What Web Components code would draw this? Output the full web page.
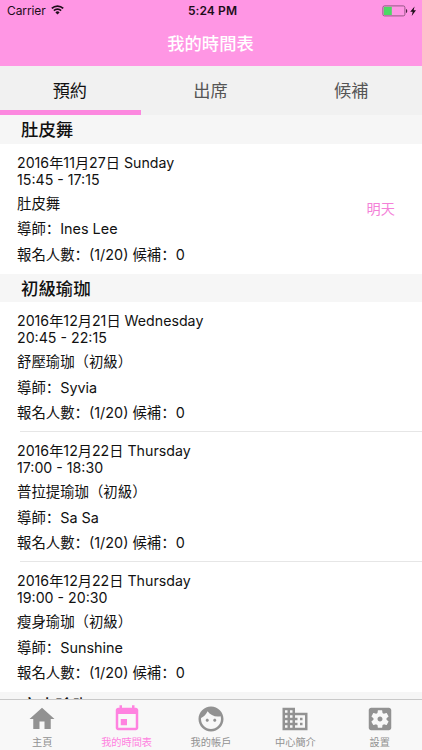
<!DOCTYPE html>
<html lang="zh-Hant">
<head>
<meta charset="utf-8">
<meta name="viewport" content="width=device-width, initial-scale=1">
<title>我的時間表</title>
<style>
  html, body { margin: 0; height: 100%; }
  body {
    --pink: #ff82e0;
    overflow: hidden;
    background: #fff;
    color: #111;
    font-family: Inter, "Noto Sans CJK TC", sans-serif;
  }
</style>
</head>
<body>
<app-screen>
  <status-bar slot="top" carrier="Carrier" time="5:24 PM"></status-bar>
  <nav-title slot="top">我的時間表</nav-title>
  <tab-strip slot="top" tabs="預約,出席,候補" selected="0"></tab-strip>

  <class-section name="肚皮舞">
    <class-entry date="2016年11月27日 Sunday" time="15:45 - 17:15" name="肚皮舞" teacher="Ines Lee" note="明天"></class-entry>
  </class-section>
  <class-section name="初級瑜珈">
    <class-entry date="2016年12月21日 Wednesday" time="20:45 - 22:15" name="舒壓瑜珈（初級）" teacher="Syvia"></class-entry>
    <class-entry date="2016年12月22日 Thursday" time="17:00 - 18:30" name="普拉提瑜珈（初級）" teacher="Sa Sa"></class-entry>
    <class-entry date="2016年12月22日 Thursday" time="19:00 - 20:30" name="瘦身瑜珈（初級）" teacher="Sunshine"></class-entry>
  </class-section>
  <class-section name="空中瑜珈"></class-section>

  <bottom-bar slot="bottom">
    <bar-item icon="home">主頁</bar-item>
    <bar-item icon="event" active>我的時間表</bar-item>
    <bar-item icon="face">我的帳戶</bar-item>
    <bar-item icon="business">中心簡介</bar-item>
    <bar-item icon="settings">設置</bar-item>
  </bottom-bar>
</app-screen>

<script>
// Shared base: stamps render() into an open shadow root.
class BaseElement extends HTMLElement {
  constructor() {
    super();
    this.attachShadow({ mode: "open" });
  }
  connectedCallback() {
    this.shadowRoot.innerHTML = this.render();
  }
  attr(name) {
    return this.getAttribute(name) || "";
  }
}

// Column layout: fixed top, clipped list, fixed bottom.
customElements.define("app-screen", class extends BaseElement {
  render() {
    return `
      <style>
        :host { display: flex; flex-direction: column; height: 100vh; overflow: hidden; }
        header, footer { flex: none; }
        main { flex: 1; min-height: 0; overflow: hidden; }
      </style>
      <header><slot name="top"></slot></header>
      <main><slot></slot></main>
      <footer><slot name="bottom"></slot></footer>`;
  }
});

customElements.define("status-bar", class extends BaseElement {
  render() {
    return `
      <style>
        :host {
          display: grid; grid-template-columns: 1fr auto 1fr; align-items: center;
          height: 22px; padding: 0 4px 0 7px; box-sizing: border-box;
          background: #ff96e4; color: #1d0d19; font-size: 12px; line-height: 22px;
        }
        .left, .right { display: flex; align-items: center; }
        .left { gap: 5px; }
        .left svg { margin-top: -2px; }
        .left span { letter-spacing: -0.1px; }
        .right { justify-content: flex-end; }
        .time { font-weight: 600; letter-spacing: 0.1px; }
        svg { display: block; }
      </style>
      <div class="left">
        <span>${this.attr("carrier")}</span>
        <svg width="13" height="10" viewBox="0 0 13 10" fill="none" stroke="#1d0d19" stroke-width="1.7">
          <path d="M.8 3.4a8.1 8.1 0 0 1 11.4 0M2.9 5.6a5.1 5.1 0 0 1 7.2 0"/>
          <path d="M6.5 9.6 4.4 7.4a3 3 0 0 1 4.2 0z" fill="#1d0d19" stroke="none"/>
        </svg>
      </div>
      <div class="time">${this.attr("time")}</div>
      <div class="right">
        <svg width="36" height="12" viewBox="0 0 36 12">
          <rect x=".9" y=".9" width="22" height="10" rx="1.6" fill="none" stroke="#8a4f7b" stroke-width=".9"/>
          <path d="M1.8 1.8h8v8.2h-8z" fill="#4cd964"/>
          <path d="M24.2 4c1.3.3 1.3 3.7 0 4z" fill="#1d0d19"/>
          <path d="M32.6 1.4 28.2 6.8h2.5l-1 4.2 4.3-5.7h-2.4z" fill="#1d0d19"/>
        </svg>
      </div>`;
  }
});

customElements.define("nav-title", class extends BaseElement {
  render() {
    return `
      <style>
        :host {
          display: block; height: 44px; background: #ff96e4; color: #fff;
          font-size: 17.3px; font-weight: 500; line-height: 43px; text-align: center;
          text-indent: -1px;
        }
      </style>
      <slot></slot>`;
  }
});

customElements.define("tab-strip", class extends BaseElement {
  render() {
    const selected = Number(this.attr("selected"));
    const tabs = this.attr("tabs").split(",").map((label, i) =>
      `<div class="${i === selected ? "on" : ""}">${label}</div>`).join("");
    return `
      <style>
        :host {
          display: grid; grid-template-columns: repeat(3, 1fr);
          height: 49px; background: #f1f1f1; color: #555;
          font-size: 17.2px; line-height: 49px; text-align: center; text-indent: -1px;
        }
        div { box-sizing: border-box; height: 49px; }
        .on { color: #111; box-shadow: inset 0 -5px #fc88df; }
      </style>
      ${tabs}`;
  }
});

customElements.define("class-section", class extends BaseElement {
  render() {
    return `
      <style>
        :host { display: block; }
        h2 {
          margin: 0; height: 28.7px; padding-left: 21px; background: #f6f6f6;
          font-size: 17.4px; font-weight: 500; line-height: 30.5px;
        }
        :host(:empty) h2 { line-height: 28px; }
      </style>
      <h2>${this.attr("name")}</h2>
      <slot></slot>`;
  }
});

customElements.define("class-entry", class extends BaseElement {
  render() {
    // the full-width colon hugs the label only in its Simplified form
    const colon = `<span class="colon" lang="zh-Hans">：</span>`;
    return `
      <style>
        :host {
          display: flex; align-items: center; justify-content: space-between;
          height: 130px; padding: 0 27px 0 17px; box-sizing: border-box;
          background: linear-gradient(#e6e6e6, #e6e6e6) 20px 100% / 100% 1px no-repeat;
          font-size: 14.2px;
        }
        :host(:last-of-type) { background: none; }
        .info { align-self: flex-start; padding-top: 10px; white-space: nowrap; }
        .info div { height: 17px; line-height: 17px; }
        .info .row { height: 25.5px; line-height: 25.5px; font-size: 14.4px; }
        .info .name { height: 24.5px; padding-top: 3px; }
        .colon { font-family: "Noto Sans CJK SC", sans-serif; }
        .note { color: #f481d8; line-height: 20px; }
      </style>
      <div class="info">
        <div>${this.attr("date")}</div>
        <div>${this.attr("time")}</div>
        <div class="row name">${this.attr("name")}</div>
        <div class="row">導師${colon}${this.attr("teacher")}</div>
        <div class="row">報名人數${colon}(1/20) 候補${colon}0</div>
      </div>
      <div class="note">${this.attr("note")}</div>`;
  }
});

customElements.define("bottom-bar", class extends BaseElement {
  render() {
    return `
      <style>
        :host {
          display: grid; grid-template-columns: repeat(5, 1fr);
          height: 51px; box-sizing: border-box;
          background: #f8f8f8; border-top: 1px solid #c9c9c9;
        }
      </style>
      <slot></slot>`;
  }
});

const ICONS = {
  home: `<path d="M10 20v-6h4v6h5v-8h3L12 3 2 12h3v8z"/>`,
  event: `<path d="M12 12H7v5h5v-5zM16 1v2H8V1H6v2H5c-1.11 0-1.99.9-1.99 2L3 19c0 1.1.89 2 2 2h14c1.1 0 2-.9 2-2V5c0-1.1-.9-2-2-2h-1V1h-2zm3 18H5V8h14v11z"/>`,
  face: `<path d="M9 11.75c-.69 0-1.25.56-1.25 1.25s.56 1.25 1.25 1.25 1.25-.56 1.25-1.25-.56-1.25-1.25-1.25zm6 0c-.69 0-1.25.56-1.25 1.25s.56 1.25 1.25 1.25 1.25-.56 1.25-1.25-.56-1.25-1.25-1.25zM12 2C6.48 2 2 6.48 2 12s4.48 10 10 10 10-4.48 10-10S17.52 2 12 2zm0 18c-4.41 0-8-3.59-8-8 0-.29.02-.58.05-.86 2.36-1.05 4.23-2.98 5.21-5.37C11.07 8.33 14.05 10 17.42 10c.78 0 1.53-.09 2.25-.26.21.71.33 1.47.33 2.26 0 4.41-3.59 8-8 8z"/>`,
  business: `<path d="M12 7V3H2v18h20V7H12zM6 19H4v-2h2v2zm0-4H4v-2h2v2zm0-4H4V9h2v2zm0-4H4V5h2v2zm4 12H8v-2h2v2zm0-4H8v-2h2v2zm0-4H8V9h2v2zm0-4H8V5h2v2zm10 12h-8v-2h2v-2h-2v-2h2v-2h-2V9h8v10zm-2-8h-2v2h2v-2zm0 4h-2v2h2v-2z"/>`,
  settings: `<path d="M12 10c-1.1 0-2 .9-2 2s.9 2 2 2 2-.9 2-2-.9-2-2-2zm7-7H5c-1.11 0-2 .9-2 2v14c0 1.1.89 2 2 2h14c1.11 0 2-.9 2-2V5c0-1.1-.89-2-2-2zm-1.75 9c0 .23-.02.46-.05.68l1.48 1.16c.13.11.17.3.08.45l-1.4 2.42c-.09.15-.27.21-.43.15l-1.74-.7c-.36.28-.76.51-1.18.69l-.26 1.85c-.03.17-.18.3-.35.3h-2.8c-.17 0-.32-.13-.35-.29l-.26-1.85c-.43-.18-.82-.41-1.18-.69l-1.74.7c-.16.06-.34 0-.43-.15l-1.4-2.42c-.09-.15-.05-.34.08-.45l1.48-1.16c-.03-.23-.05-.46-.05-.69 0-.23.02-.46.05-.68l-1.48-1.16c-.13-.11-.17-.3-.08-.45l1.4-2.42c.09-.15.27-.21.43-.15l1.74.7c.36-.28.76-.51 1.18-.69l.26-1.85c.03-.17.18-.3.35-.3h2.8c.17 0 .32.13.35.29l.26 1.85c.43.18.82.41 1.18.69l1.74-.7c.16-.06.34 0 .43.15l1.4 2.42c.09.15.05.34-.08.45l-1.48 1.16c.03.23.05.46.05.69z"/>`,
};

customElements.define("bar-item", class extends BaseElement {
  render() {
    return `
      <style>
        :host {
          display: flex; flex-direction: column; align-items: center;
          padding-top: 4px; color: #929292; font-size: 10.2px; line-height: 16px;
        }
        :host([active]) { color: var(--pink); }
        svg { display: block; width: 30px; height: 30px; fill: currentColor; }
      </style>
      <svg viewBox="0 0 24 24">${ICONS[this.attr("icon")]}</svg>
      <span><slot></slot></span>`;
  }
});
</script>
</body>
</html>
